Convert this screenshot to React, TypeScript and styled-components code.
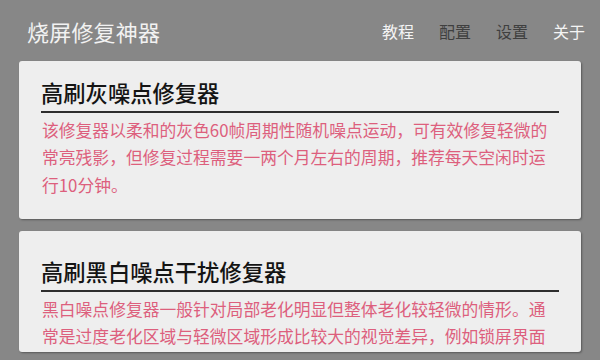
import React from "react";
import styled, { createGlobalStyle } from "styled-components";

const Global = createGlobalStyle`
  html, body {
    margin: 0;
    padding: 0;
    background: #878787;
    overflow: hidden;
  }
  body {
    font-family: "Noto Sans CJK SC", "Noto Sans", sans-serif;
  }
`;

const Page = styled.div`
  width: 600px;
  height: 360px;
  background: #878787;
  overflow: hidden;
`;

const Header = styled.header`
  height: 61px;
  display: flex;
  align-items: center;
  justify-content: space-between;
  padding: 0 15px 0 27px;
  box-sizing: border-box;
`;

const AppTitle = styled.h1`
  margin: 0;
  font-size: 22px;
  font-weight: 400;
  line-height: 30px;
  color: #f2f2f2;
  letter-spacing: 0.2px;
`;

const Menu = styled.nav`
  display: flex;
  gap: 25px;
`;

const MenuItem = styled.span<{ $dim?: boolean }>`
  font-size: 16px;
  line-height: 22px;
  color: ${(p) => (p.$dim ? "#3f3f3f" : "#f4f4f4")};
`;

const List = styled.main`
  display: flex;
  flex-direction: column;
  gap: 12px;
  padding: 0 19px;
`;

const Card = styled.section<{ $top: number; $bottom: number }>`
  background: #eeeeee;
  border-radius: 3px;
  box-shadow: 1px 1px 2px rgba(0, 0, 0, 0.35);
  padding: ${(p) => p.$top}px 22px ${(p) => p.$bottom}px;
`;

const CardTitle = styled.h2`
  margin: 0;
  font-size: 22.3px;
  font-weight: 500;
  line-height: 30px;
  color: #141414;
  padding-bottom: 4px;
  border-bottom: 2px solid #2e2e2e;
`;

const Body = styled.p`
  margin: 4px 0 0 1px;
  font-size: 16.8px;
  line-height: 27.3px;
  color: #dd5f7d;
  white-space: nowrap;
`;

const cards = [
  {
    title: "高刷灰噪点修复器",
    top: 16,
    bottom: 20,
    lines: [
      "该修复器以柔和的灰色60帧周期性随机噪点运动，可有效修复轻微的",
      "常亮残影，但修复过程需要一两个月左右的周期，推荐每天空闲时运",
      "行10分钟。",
    ],
  },
  {
    title: "高刷黑白噪点干扰修复器",
    top: 25,
    bottom: 2,
    lines: [
      "黑白噪点修复器一般针对局部老化明显但整体老化较轻微的情形。通",
      "常是过度老化区域与轻微区域形成比较大的视觉差异，例如锁屏界面",
    ],
  },
];

const menu = [
  { label: "教程", dim: false },
  { label: "配置", dim: true },
  { label: "设置", dim: true },
  { label: "关于", dim: false },
];

export default function App() {
  return (
    <Page>
      <Global />
      <Header>
        <AppTitle>烧屏修复神器</AppTitle>
        <Menu>
          {menu.map((m) => (
            <MenuItem key={m.label} $dim={m.dim}>
              {m.label}
            </MenuItem>
          ))}
        </Menu>
      </Header>
      <List>
        {cards.map((c) => (
          <Card key={c.title} $top={c.top} $bottom={c.bottom}>
            <CardTitle>{c.title}</CardTitle>
            <Body>
              {c.lines.map((l, i) => (
                <React.Fragment key={i}>
                  {l}
                  {i < c.lines.length - 1 && <br />}
                </React.Fragment>
              ))}
            </Body>
          </Card>
        ))}
      </List>
    </Page>
  );
}
